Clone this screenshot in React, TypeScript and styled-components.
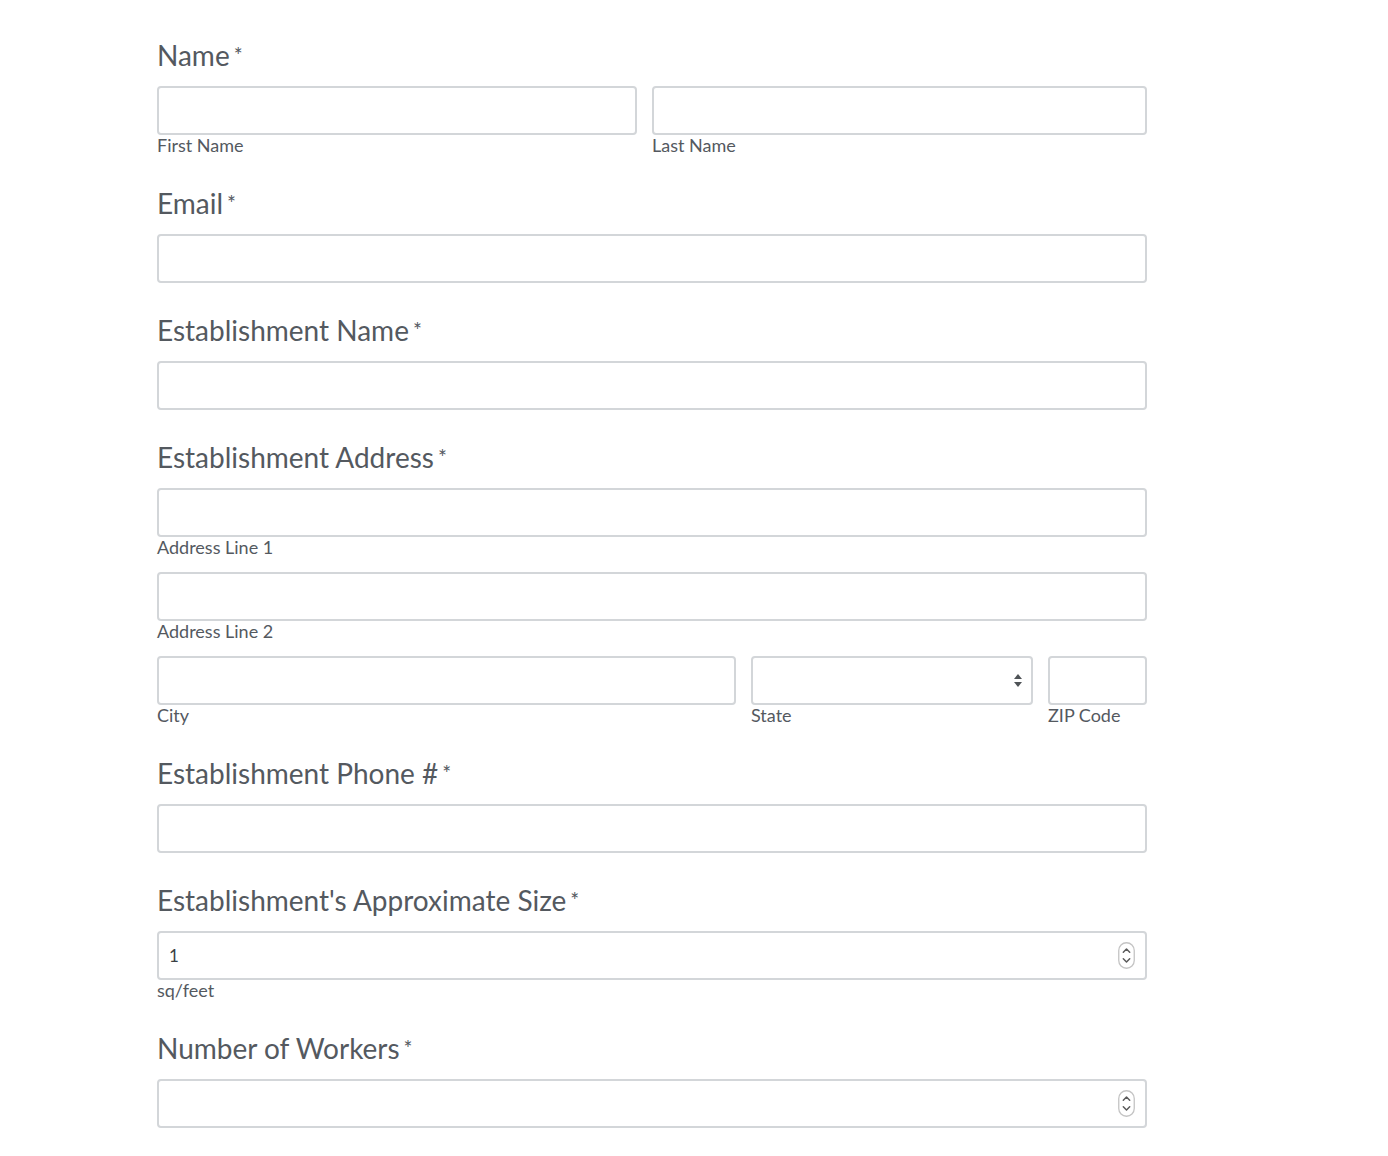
import React from "react";
import styled, { createGlobalStyle } from "styled-components";

const Global = createGlobalStyle`
  html, body { margin: 0; padding: 0; background: #ffffff; }
  body { font-family: Lato, "Open Sans", "Liberation Sans", sans-serif; color: #54595f; }
  * { box-sizing: border-box; }
`;

const Form = styled.form`
  width: 990px;
  margin-left: 157px;
  padding-top: 39px;
  padding-bottom: 27px;
  display: flex;
  flex-direction: column;
  gap: 31px;
`;

const Field = styled.div`
  display: flex;
  flex-direction: column;
`;

const Label = styled.label`
  font-size: 28px;
  line-height: 32px;
  height: 32px;
  color: #54595f;
  margin-bottom: 15px;
  white-space: nowrap;
  display: flex;
  align-items: flex-start;
`;

const Req = styled.span`
  font-size: 21px;
  line-height: 21px;
  margin-left: 4px;
  margin-top: 5px;
  color: #54595f;
`;

const Row = styled.div<{ $cols: string }>`
  display: grid;
  grid-template-columns: ${(p) => p.$cols};
  column-gap: 15px;
`;

const Stack = styled.div`
  display: flex;
  flex-direction: column;
  gap: 14px;
`;

const Cell = styled.div`
  display: flex;
  flex-direction: column;
  min-width: 0;
`;

const Input = styled.input`
  width: 100%;
  height: 49px;
  border: 2px solid #d3d6d9;
  border-radius: 4px;
  background: #fff;
  padding: 0 10px;
  font-family: Lato, "Liberation Sans", sans-serif;
  font-size: 17px;
  color: #3b3f44;
  outline: none;
  appearance: textfield;
  -moz-appearance: textfield;
  &::-webkit-inner-spin-button,
  &::-webkit-outer-spin-button {
    -webkit-appearance: none;
    margin: 0;
  }
`;

const SelectWrap = styled.div`
  position: relative;
`;

const Select = styled.select`
  width: 100%;
  height: 49px;
  border: 2px solid #d3d6d9;
  border-radius: 4px;
  background: #fff;
  appearance: none;
  -webkit-appearance: none;
  outline: none;
  font-family: Lato, "Liberation Sans", sans-serif;
  font-size: 16px;
`;

const SelectArrows = styled.svg`
  position: absolute;
  right: 9px;
  top: 15px;
  pointer-events: none;
`;

const NumberWrap = styled.div`
  position: relative;
`;

const Spinner = styled.svg`
  position: absolute;
  right: 12px;
  top: 11px;
  pointer-events: none;
`;

const Sub = styled.span`
  font-size: 18px;
  line-height: 21px;
  height: 21px;
  color: #54595f;
  white-space: nowrap;
`;

const SpinIcon = () => (
  <Spinner width="17" height="27" viewBox="0 0 17 27">
    <rect x="0.75" y="0.75" width="15.5" height="25.5" rx="7.75" fill="#fff" stroke="#c4c4c4" strokeWidth="1.3" />
    <path d="M5.3 10.2 L8.5 7 L11.7 10.2" fill="none" stroke="#5a5a5a" strokeWidth="1.5" strokeLinecap="round" strokeLinejoin="round" />
    <path d="M5.3 16.8 L8.5 20 L11.7 16.8" fill="none" stroke="#5a5a5a" strokeWidth="1.5" strokeLinecap="round" strokeLinejoin="round" />
  </Spinner>
);

const TitleLabel = ({ children }: { children: React.ReactNode }) => (
  <Label>
    {children}
    <Req>*</Req>
  </Label>
);

export default function App() {
  return (
    <>
      <Global />
      <Form onSubmit={(e) => e.preventDefault()}>
        <Field>
          <TitleLabel>Name</TitleLabel>
          <Row $cols="480px 1fr">
            <Cell>
              <Input type="text" />
              <Sub>First Name</Sub>
            </Cell>
            <Cell>
              <Input type="text" />
              <Sub>Last Name</Sub>
            </Cell>
          </Row>
        </Field>

        <Field>
          <TitleLabel>Email</TitleLabel>
          <Input type="email" />
        </Field>

        <Field>
          <TitleLabel>Establishment Name</TitleLabel>
          <Input type="text" />
        </Field>

        <Field>
          <TitleLabel>Establishment Address</TitleLabel>
          <Stack>
            <Cell>
              <Input type="text" />
              <Sub>Address Line 1</Sub>
            </Cell>
            <Cell>
              <Input type="text" />
              <Sub>Address Line 2</Sub>
            </Cell>
            <Row $cols="579px 282px 1fr">
              <Cell>
                <Input type="text" />
                <Sub>City</Sub>
              </Cell>
              <Cell>
                <SelectWrap>
                  <Select defaultValue="">
                    <option value=""></option>
                  </Select>
                  <SelectArrows width="12" height="19" viewBox="0 0 12 19">
                    <path d="M2 8 L6 3 L10 8 Z" fill="#4f5357" />
                    <path d="M2 11 L6 16 L10 11 Z" fill="#4f5357" />
                  </SelectArrows>
                </SelectWrap>
                <Sub>State</Sub>
              </Cell>
              <Cell>
                <Input type="text" />
                <Sub>ZIP Code</Sub>
              </Cell>
            </Row>
          </Stack>
        </Field>

        <Field>
          <TitleLabel>Establishment Phone #</TitleLabel>
          <Input type="tel" />
        </Field>

        <Field>
          <TitleLabel>Establishment's Approximate Size</TitleLabel>
          <NumberWrap>
            <Input type="number" defaultValue={1} />
            <SpinIcon />
          </NumberWrap>
          <Sub>sq/feet</Sub>
        </Field>

        <Field>
          <TitleLabel>Number of Workers</TitleLabel>
          <NumberWrap>
            <Input type="number" />
            <SpinIcon />
          </NumberWrap>
        </Field>
      </Form>
    </>
  );
}
